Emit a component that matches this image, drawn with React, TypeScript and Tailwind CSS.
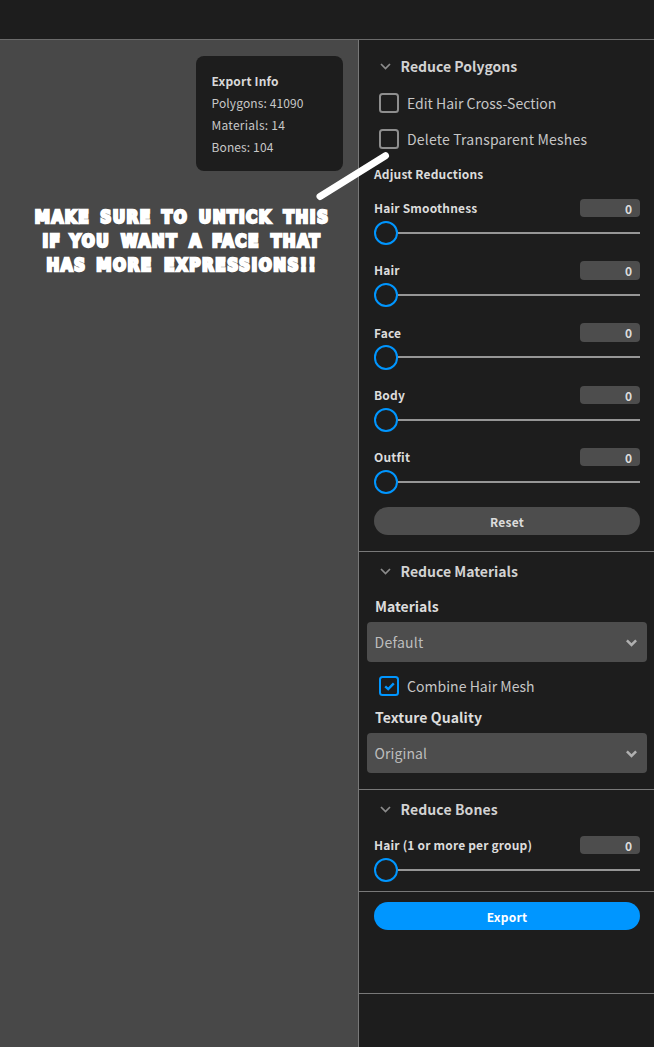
import { ReactNode } from "react";

function Chevron() {
  return (
    <svg className="h-[7px] w-[11px]" viewBox="0 0 11 7" fill="none" stroke="#8c8c8c" strokeWidth="1.7">
      <path d="M1 1L5.5 5.6L10 1" />
    </svg>
  );
}

function SectionTitle({ children, spacing = "" }: { children: ReactNode; spacing?: string }) {
  return (
    <div className="flex h-5 items-center pl-[21px]">
      <Chevron />
      <h2 className={`ml-[9.5px] text-[14px] leading-5 font-bold text-[#d2d2d2] ${spacing}`}>{children}</h2>
    </div>
  );
}

function CheckRow({ label, checked = false, spacing = "" }: { label: string; checked?: boolean; spacing?: string }) {
  return (
    <div className="flex h-5 items-center pl-5">
      <div className={`flex size-5 items-center justify-center rounded-[3.5px] border-2 ${checked ? "border-[#0096ff]" : "border-[#8e8e8e]"}`}>
        {checked && (
          <svg className="h-[9px] w-[11px]" viewBox="0 0 11 9" fill="none" stroke="#0096ff" strokeWidth="2.4">
            <path d="M1.2 4.3L4.2 7.1L9.8 1.3" />
          </svg>
        )}
      </div>
      <span className={`ml-2 text-[14px] leading-5 whitespace-nowrap text-[#c6c6c6] ${spacing}`}>{label}</span>
    </div>
  );
}

function Slider({ label }: { label: string }) {
  return (
    <div className="h-[62.2px] pr-[14px] pl-[15px]">
      <div className="flex h-[18.3px] items-center justify-between">
        <span className="text-[12px] leading-[18px] font-bold tracking-[0.17px] whitespace-nowrap text-[#dcdcdc]">{label}</span>
        <span className="h-[18.3px] w-[60px] rounded-[4px] bg-[#4d4d4d] pr-2 text-right text-[12px] leading-[20px] font-bold text-[#dcdcdc]">
          0
        </span>
      </div>
      <div className="mt-[3.6px] flex h-[24.2px] items-center">
        <div className="size-[24.2px] rounded-full border-2 border-[#0096ff]" />
        <div className="h-[2px] flex-1 bg-[#969696]" />
      </div>
    </div>
  );
}

function Select({ value, spacing }: { value: string; spacing: string }) {
  return (
    <div className="mr-[7px] ml-2 flex h-10 items-center justify-between rounded-[4px] bg-[#4d4d4d] pr-[10px] pl-[7.5px]">
      <span className={`text-[14px] leading-5 text-[#bdbdbd] ${spacing}`}>{value}</span>
      <svg className="mt-[1px] h-[8px] w-[11px]" viewBox="0 0 11 8" fill="none" stroke="#b0b0b0" strokeWidth="2.5">
        <path d="M0.9 1.3L5.5 5.9L10.1 1.3" />
      </svg>
    </div>
  );
}

const sliders = ["Hair Smoothness", "Hair", "Face", "Body", "Outfit"];

const callout = [
  [
    ["MAKE", "w-[54px]"],
    ["SURE", "w-[53px]"],
    ["TO", "w-[25px]"],
    ["UNTICK", "w-[76px]"],
    ["THIS", "w-[46px]"],
  ],
  [
    ["IF", "w-[18px]"],
    ["YOU", "w-[38px]"],
    ["WANT", "w-[61px]"],
    ["A", "w-[12px]"],
    ["FACE", "w-[48px]"],
    ["THAT", "w-[52px]"],
  ],
  [
    ["HAS", "w-[39px]"],
    ["MORE", "w-[57px]"],
    ["EXPRESSIONS!!", "w-[155px]"],
  ],
];

export default function App() {
  return (
    <div className="flex h-[1047px] w-[654px] flex-col overflow-hidden bg-[#1d1d1d] font-['Noto_Sans_CJK_JP',sans-serif]">
      <header className="h-10 shrink-0 border-b border-[#6b6b6b]" />
      <div className="flex flex-1">
        <main className="relative w-[358px] shrink-0 bg-[#484848] pt-4">
          <div className="ml-[196px] h-[115px] w-[147px] rounded-[8px] bg-[#1d1d1d] pt-[14px] pl-[15.5px] text-[12px] leading-[22px] text-[#c8c8c8]">
            <div className="font-bold tracking-[0.17px] text-[#d8d8d8]">Export Info</div>
            <div className="tracking-[0.12px]">Polygons: 41090</div>
            <div className="tracking-[0.25px]">Materials: 14</div>
            <div className="tracking-[0.12px]">Bones: 104</div>
          </div>
          <div className="mt-[34px] flex w-[365px] flex-col items-center font-['DejaVu_Sans_Condensed','DejaVu_Sans',sans-serif] text-[17px] leading-6 font-bold tracking-[1.5px] whitespace-nowrap text-white [-webkit-text-stroke:2.3px_white]">
            {callout.map((line, i) => (
              <div key={i} className="flex gap-[10px]">
                {line.map(([word, width]) => (
                  <span key={word} className={`flex justify-center ${width}`}>
                    {word}
                  </span>
                ))}
              </div>
            ))}
          </div>
          <svg className="absolute top-[108px] left-[310px] z-10 h-[60px] w-[85px]" viewBox="0 0 85 60">
            <path d="M10 48.5L75.5 7.7" stroke="#fff" strokeWidth="7" strokeLinecap="round" />
          </svg>
        </main>
        <aside className="flex-1 border-l border-[#787878]">
          <section className="h-[512px] border-b border-[#787878] pt-4">
            <SectionTitle>Reduce Polygons</SectionTitle>
            <div className="mt-[17px] flex flex-col gap-4">
              <CheckRow label="Edit Hair Cross-Section" />
              <CheckRow label="Delete Transparent Meshes" spacing="tracking-[0.19px]" />
            </div>
            <h3 className="mt-[16px] pl-[15px] text-[12px] leading-[18px] font-bold tracking-[0.17px] text-[#dcdcdc]">Adjust Reductions</h3>
            <div className="mt-[16.1px]">
              {sliders.map((s) => (
                <Slider key={s} label={s} />
              ))}
            </div>
            <button className="mr-[14px] ml-[15px] mt-[-3px] block h-7 w-[266px] rounded-full bg-[#4d4d4d] pt-[2px] text-[12px] leading-[26px] font-bold tracking-[0.2px] text-[#dcdcdc]">
              Reset
            </button>
          </section>
          <section className="h-[238px] border-b border-[#787878] pt-[9px]">
            <SectionTitle>Reduce Materials</SectionTitle>
            <h3 className="mt-[15px] mb-[6px] pl-4 text-[14px] leading-5 font-bold text-[#dcdcdc]">Materials</h3>
            <Select value="Default" spacing="tracking-[0.25px]" />
            <div className="mt-[14px]">
              <CheckRow label="Combine Hair Mesh" spacing="tracking-[0.04px]" checked />
            </div>
            <h3 className="mt-[11px] mb-[6px] pl-4 text-[14px] leading-5 font-bold tracking-[0.1px] text-[#dcdcdc]">Texture Quality</h3>
            <Select value="Original" spacing="tracking-[0.1px]" />
          </section>
          <section className="h-[102px] border-b border-[#787878] pt-[9px]">
            <SectionTitle spacing="tracking-[0.1px]">Reduce Bones</SectionTitle>
            <div className="mt-[17px]">
              <Slider label="Hair (1 or more per group)" />
            </div>
          </section>
          <section className="h-[102px] border-b border-[#787878] pt-[10px]">
            <button className="ml-[15px] block h-7 w-[266px] rounded-full bg-[#0096ff] pt-[2px] text-[12px] leading-[26px] font-bold tracking-[0.25px] text-white">
              Export
            </button>
          </section>
        </aside>
      </div>
    </div>
  );
}
